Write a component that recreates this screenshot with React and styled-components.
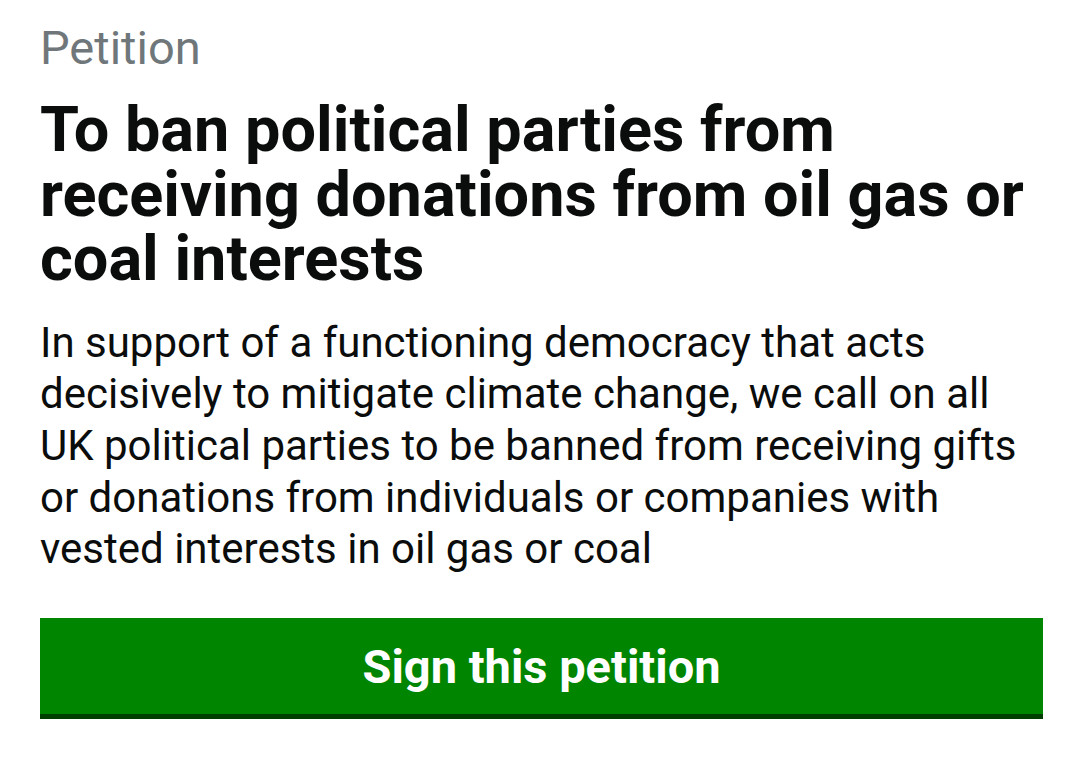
import React from "react";
import styled, { createGlobalStyle } from "styled-components";

const Global = createGlobalStyle`
  html, body { margin: 0; padding: 0; background: #ffffff; }
  body { font-family: Roboto, "Noto Sans", sans-serif; }
`;

const Page = styled.div`
  width: 1080px;
  height: 758px;
  box-sizing: border-box;
  padding: 21px 37px 0 40px;
  display: flex;
  flex-direction: column;
`;

const Kicker = styled.div`
  font-size: 47px;
  line-height: 54px;
  color: #6f777b;
`;

const Title = styled.h1`
  margin: 23px 0 0;
  font-size: 63px;
  line-height: 64.5px;
  font-weight: 700;
  color: #0b0c0c;
`;

const Body = styled.p`
  margin: 25px 0 0;
  font-size: 42px;
  line-height: 51.7px;
  color: #0b0c0c;
`;

const Button = styled.button`
  margin-top: 43px;
  height: 101px;
  width: 100%;
  border: none;
  border-bottom: 5px solid #003d00;
  background: #008500;
  color: #ffffff;
  font-family: Roboto, "Noto Sans", sans-serif;
  font-size: 47px;
  font-weight: 700;
  padding: 0;
  box-sizing: border-box;
`;

export default function App() {
  return (
    <>
      <Global />
      <Page>
        <Kicker>Petition</Kicker>
        <Title>To ban political parties from receiving donations from oil gas or coal interests</Title>
        <Body>
          In support of a functioning democracy that acts decisively to mitigate climate change, we call on all UK political parties to be banned from receiving gifts or donations from individuals or companies with vested interests in oil gas or coal
        </Body>
        <Button>Sign this petition</Button>
      </Page>
    </>
  );
}
